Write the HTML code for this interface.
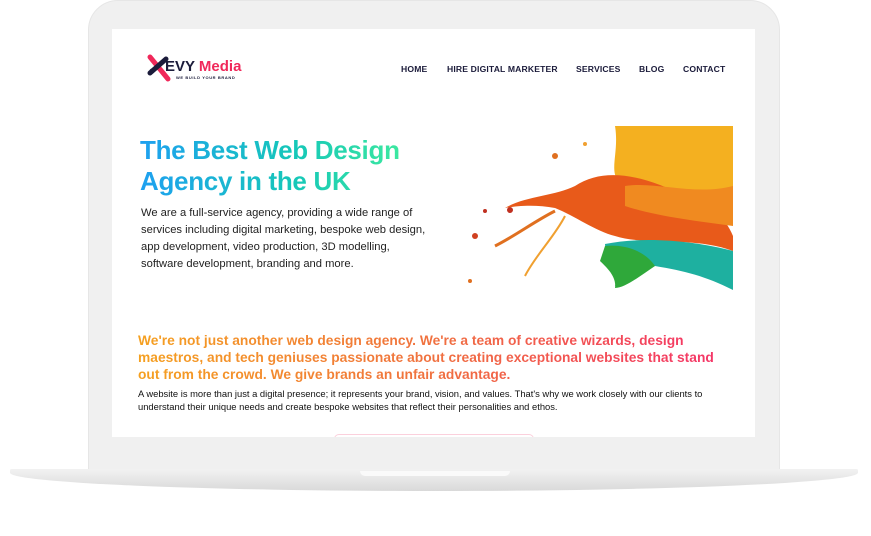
<!DOCTYPE html>
<html><head><meta charset="utf-8"><style>
*{margin:0;padding:0;box-sizing:border-box}
body{width:871px;height:536px;background:#fff;position:relative;overflow:hidden;font-family:"Liberation Sans",sans-serif}
.bezel{position:absolute;left:88px;top:0;width:692px;height:475px;background:#f0f0f0;border-radius:30px 30px 0 0;border:1px solid #e6e6e6}
.screen{position:absolute;left:112px;top:29px;width:643px;height:408px;background:#fff;overflow:hidden}
.base{position:absolute;left:10px;top:469px;width:848px;height:22px;background:linear-gradient(#f2f2f2,#d9d9d9);border-radius:2px 2px 60% 60%/2px 2px 100% 100%}
.notch{position:absolute;left:360px;top:471px;width:150px;height:5px;background:#fafafa;border-radius:0 0 6px 6px}
.abs{position:absolute}
.nav{font-size:8.6px;font-weight:bold;color:#1b1b3a;letter-spacing:.15px;top:35px;white-space:nowrap}
h1{position:absolute;left:28px;top:106px;font-size:26px;line-height:31px;font-weight:bold;background:linear-gradient(90deg,#1ea0f0,#16c8b8 60%,#3ce8a0);-webkit-background-clip:text;color:transparent;letter-spacing:-.3px}
.p1{left:29px;top:176px;font-size:11.2px;line-height:17px;color:#222;white-space:nowrap}
.h2{left:26px;top:303px;font-size:13.8px;line-height:17px;font-weight:bold;width:600px;background:linear-gradient(90deg,#f5a020,#f07040 50%,#f5306a);-webkit-background-clip:text;color:transparent}
.p2{left:26px;top:358px;font-size:9.4px;line-height:13px;color:#111;white-space:nowrap}
</style></head><body>
<div class="bezel"></div>
<div class="base"></div><div class="notch"></div>
<div class="screen">
 <svg class="abs" style="left:34px;top:24px" width="30" height="30" viewBox="0 0 30 30"><path d="M4 4 L22 26" stroke="#f0285a" stroke-width="5" stroke-linecap="round"/><path d="M4 20 L20 6" stroke="#1b1b3a" stroke-width="5" stroke-linecap="round"/><circle cx="6" cy="18" r="2.5" fill="#1b1b3a"/></svg>
 <div class="abs" style="left:53px;top:29px;font-size:15px;font-weight:bold;color:#1b1b3a">EVY <span style="color:#f0285a">Media</span></div>
 <div class="abs" style="left:64px;top:46px;font-size:4px;color:#1b1b3a;letter-spacing:.6px;font-weight:bold">WE BUILD YOUR BRAND</div>
 <div class="abs nav" style="left:289px">HOME</div>
 <div class="abs nav" style="left:335px">HIRE DIGITAL MARKETER</div>
 <div class="abs nav" style="left:464px">SERVICES</div>
 <div class="abs nav" style="left:527px">BLOG</div>
 <div class="abs nav" style="left:571px">CONTACT</div>
 <h1>The Best Web Design<br>Agency in the UK</h1>
 <div class="abs p1">We are a full-service agency, providing a wide range of<br>services including digital marketing, bespoke web design,<br>app development, video production, 3D modelling,<br>software development, branding and more.</div>
 <svg class="abs" style="left:343px;top:97px" width="278" height="164" viewBox="0 0 278 164">
  <path d="M160 0 L278 0 L278 90 C240 70 200 80 170 60 C150 50 165 30 160 0Z" fill="#f4b020"/>
  <path d="M120 60 C150 40 190 50 230 70 C255 80 270 90 278 110 L278 125 C240 110 190 120 160 110 C140 105 120 90 100 82 C80 78 60 80 50 82 C70 70 100 70 120 60Z" fill="#e85a1a"/>
  <path d="M170 60 C200 55 240 70 278 60 L278 100 C240 95 200 90 170 80Z" fill="#f08a20"/>
  <path d="M150 118 C190 110 240 115 278 125 L278 164 C250 150 230 145 200 140 C180 145 170 160 160 160 C165 145 150 130 150 118Z" fill="#1eb0a0"/>
  <path d="M150 120 C170 118 190 125 200 140 C185 150 170 162 160 162 C162 150 150 140 145 135Z" fill="#2fa83a"/>
  <path d="M100 85 C80 95 60 110 40 120" stroke="#e07020" stroke-width="3" fill="none"/>
  <path d="M110 90 C100 110 80 130 70 150" stroke="#f0a030" stroke-width="2" fill="none"/>
  <circle cx="20" cy="110" r="3" fill="#d04020"/><circle cx="55" cy="84" r="3" fill="#c03020"/><circle cx="30" cy="85" r="2" fill="#c03020"/><circle cx="100" cy="30" r="3" fill="#e07020"/><circle cx="130" cy="18" r="2" fill="#f0a030"/><circle cx="15" cy="155" r="2" fill="#e07020"/>
 </svg>
 <div class="abs h2">We're not just another web design agency. We're a team of creative wizards, design maestros, and tech geniuses passionate about creating exceptional websites that stand out from the crowd. We give brands an unfair advantage.</div>
 <div class="abs p2">A website is more than just a digital presence; it represents your brand, vision, and values. That's why we work closely with our clients to<br>understand their unique needs and create bespoke websites that reflect their personalities and ethos.</div>
 <div class="abs" style="left:222px;top:405px;width:200px;height:10px;border:1px solid #fbd0dc;border-radius:5px"></div>
</div>
</body></html>
